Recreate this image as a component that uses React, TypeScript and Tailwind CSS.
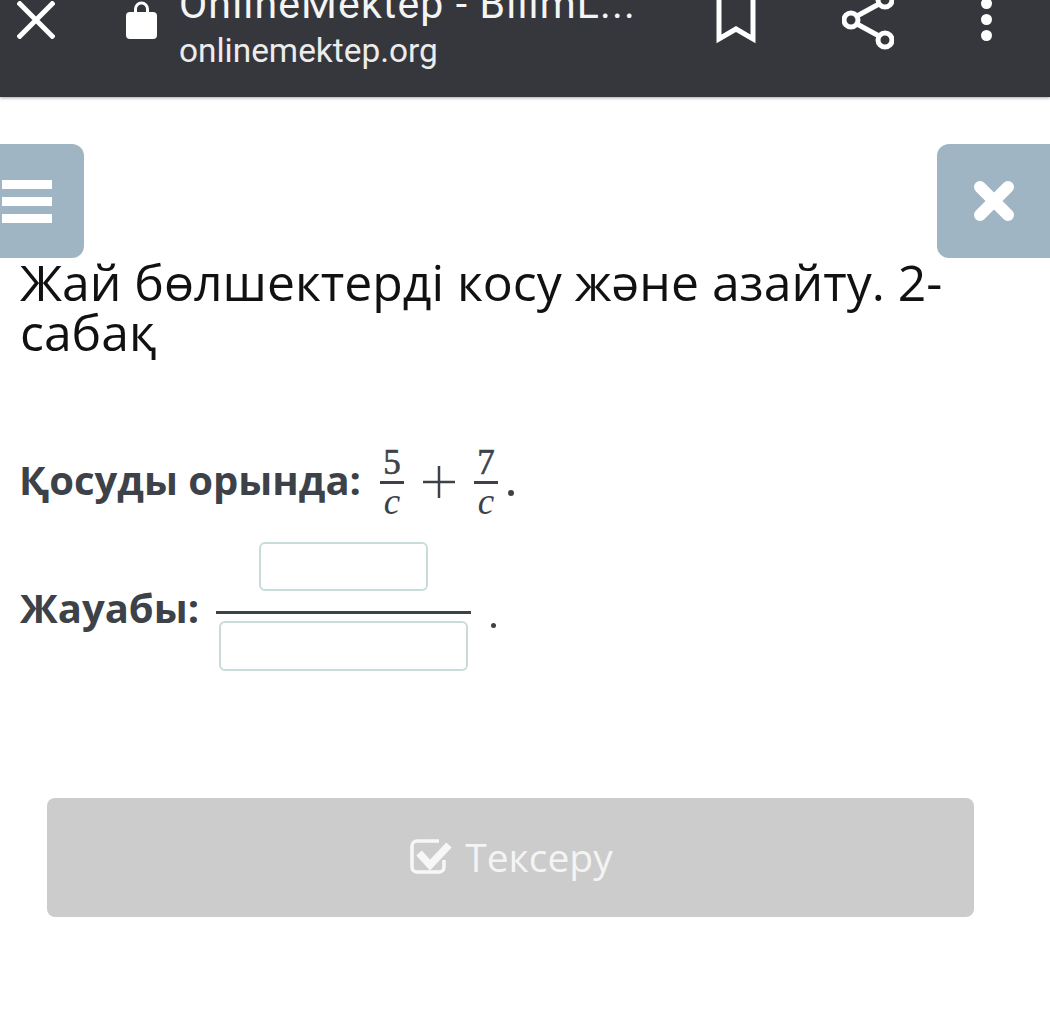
const Fraction = ({ top }: { top: string }) => (
  <span className="mt-[4px] flex w-[24px] flex-col items-center font-['Liberation_Serif',serif] text-[#3d4249]">
    <span className="h-[36px] text-[35px] leading-[36px] [-webkit-text-stroke:0.6px_#3d4249]">{top}</span>
    <span className="h-[3px] w-[24px] bg-[#3d4249]" />
    <span className="h-[35px] text-[37px] italic leading-[35px]">c</span>
  </span>
);

const App = () => {
  return (
    <div className="h-[1019px] w-[1050px] overflow-hidden bg-white font-['Open_Sans',sans-serif]">
      {/* browser bar */}
      <header className="relative h-[97px] overflow-hidden bg-[#36373c] shadow-[0_1px_3px_rgba(0,0,0,0.35)]">
        <div className="flex items-start">
          <svg className="ml-[17px] mt-[1px] shrink-0" width="38" height="38" viewBox="0 0 38 38" stroke="#fff" strokeWidth="5">
            <path d="M1 1l36 36M37 1L1 37" />
          </svg>
          <svg className="ml-[71px] shrink-0" width="31" height="39" viewBox="0 0 31 39" fill="#fff">
            <path d="M8 16V9a7.500 7.500 0 0115 0v7h-3V9a4.500 4.500 0 00-9 0v7z" />
            <rect x="0" y="12" width="31" height="27" rx="4" />
          </svg>
          <div className="ml-[22px] mt-[-21px] w-[480px] font-['Roboto',sans-serif] text-[#f4f4f4]">
            <div className="h-[50px] whitespace-nowrap text-[41px] leading-[50px] tracking-[1.15px]">OnlineMektep - BilimL...</div>
            <div className="mt-[2px] text-[33.4px] leading-[40px] text-[#ececec]">onlinemektep.org</div>
          </div>
          <svg className="ml-[57px] mt-[-2px] shrink-0" width="40" height="48" viewBox="0 0 40 48" fill="none" stroke="#fff" strokeWidth="5">
            <path d="M3 -4V41L20 31L37 41V-4" />
          </svg>
          <svg className="ml-[86px] mt-[-4px] shrink-0" width="52" height="54" viewBox="0 0 52 54" fill="none" stroke="#fff" strokeWidth="5">
            <circle cx="43" cy="4" r="7" />
            <circle cx="9" cy="24" r="7" />
            <circle cx="43" cy="44" r="7" />
            <path d="M15 20L37 8M15 28L37 40" />
          </svg>
          <div className="ml-[87px] mt-[-2px] flex shrink-0 flex-col gap-[5px]">
            <span className="h-[11px] w-[11px] rounded-full bg-white" />
            <span className="h-[11px] w-[11px] rounded-full bg-white" />
            <span className="h-[11px] w-[11px] rounded-full bg-white" />
          </div>
        </div>
      </header>

      {/* side buttons */}
      <div className="mt-[47px] flex h-[114px] justify-between">
        <div className="flex w-[84px] flex-col justify-center gap-[8px] rounded-r-[12px] bg-[#a0b5c3] pl-[2px] pr-[32px]">
          <span className="h-[9px] bg-white" />
          <span className="h-[9px] bg-white" />
          <span className="h-[9px] bg-white" />
        </div>
        <div className="flex w-[113px] items-center rounded-l-[12px] bg-[#a0b5c3] pl-[37px]">
          <svg width="40" height="40" viewBox="0 0 40 40" stroke="#fff" strokeWidth="12" strokeLinecap="round">
            <path d="M6 6l28 28M34 6L6 34" />
          </svg>
        </div>
      </div>

      <main className="px-[20px]">
        <h1 className="-mt-[1px] text-[49.9px] font-normal leading-[50px] text-[#111111]">
          Жай бөлшектерді косу және азайту. 2-сабақ
        </h1>

        <div className="mt-[84px] flex h-[78px] items-center text-[#3d4249]">
          <span className="-ml-[1px] text-[40px] font-bold leading-[50px]">Қосуды орында:</span>
          <span className="ml-[19px]">
            <Fraction top="5" />
          </span>
          <svg className="mx-[18px] mt-[4px] shrink-0" width="34" height="34" viewBox="0 0 34 34" stroke="#3d4249" strokeWidth="2.5">
            <path d="M1 17h32M17 1v32" />
          </svg>
          <Fraction top="7" />
          <span className="ml-[10px] mt-[26px] h-[6px] w-[6px] rounded-full bg-[#3d4249]" />
        </div>

        <div className="mt-[23px] flex items-center text-[#3d4249]">
          <span className="mt-[3px] text-[40px] font-bold leading-[50px]">Жауабы:</span>
          <div className="ml-[17px] flex w-[255px] flex-col items-center">
            <div className="h-[49px] w-[169px] rounded-[6px] border-2 border-[#cadbdb] bg-white" />
            <div className="mt-[20px] h-[3px] w-full bg-[#3d4249]" />
            <div className="mt-[7px] h-[50px] w-[249px] rounded-[6px] border-2 border-[#cadbdb] bg-white" />
          </div>
          <span className="ml-[20px] mt-[38px] h-[5px] w-[5px] rounded-full bg-[#3d4249]" />
        </div>

        <button className="ml-[27px] mt-[127px] flex h-[119px] w-[927px] items-center justify-center gap-[13px] rounded-[8px] bg-[#cccccc] text-[39px] text-[#f4f4f4]">
          <svg width="44" height="38" viewBox="0 0 44 38" fill="none">
            <path d="M31 33H9a5 5 0 01-5-5V7a5 5 0 015-5h22" stroke="#f7f7f7" strokeWidth="3.500" />
            <path d="M36 21v7a5 5 0 01-5 5" stroke="#f7f7f7" strokeWidth="3.500" />
            <path d="M11 14l11 12L41 6" stroke="#f7f7f7" strokeWidth="7.500" />
          </svg>
          <span>Тексеру</span>
        </button>
      </main>
    </div>
  );
};

export default App;
